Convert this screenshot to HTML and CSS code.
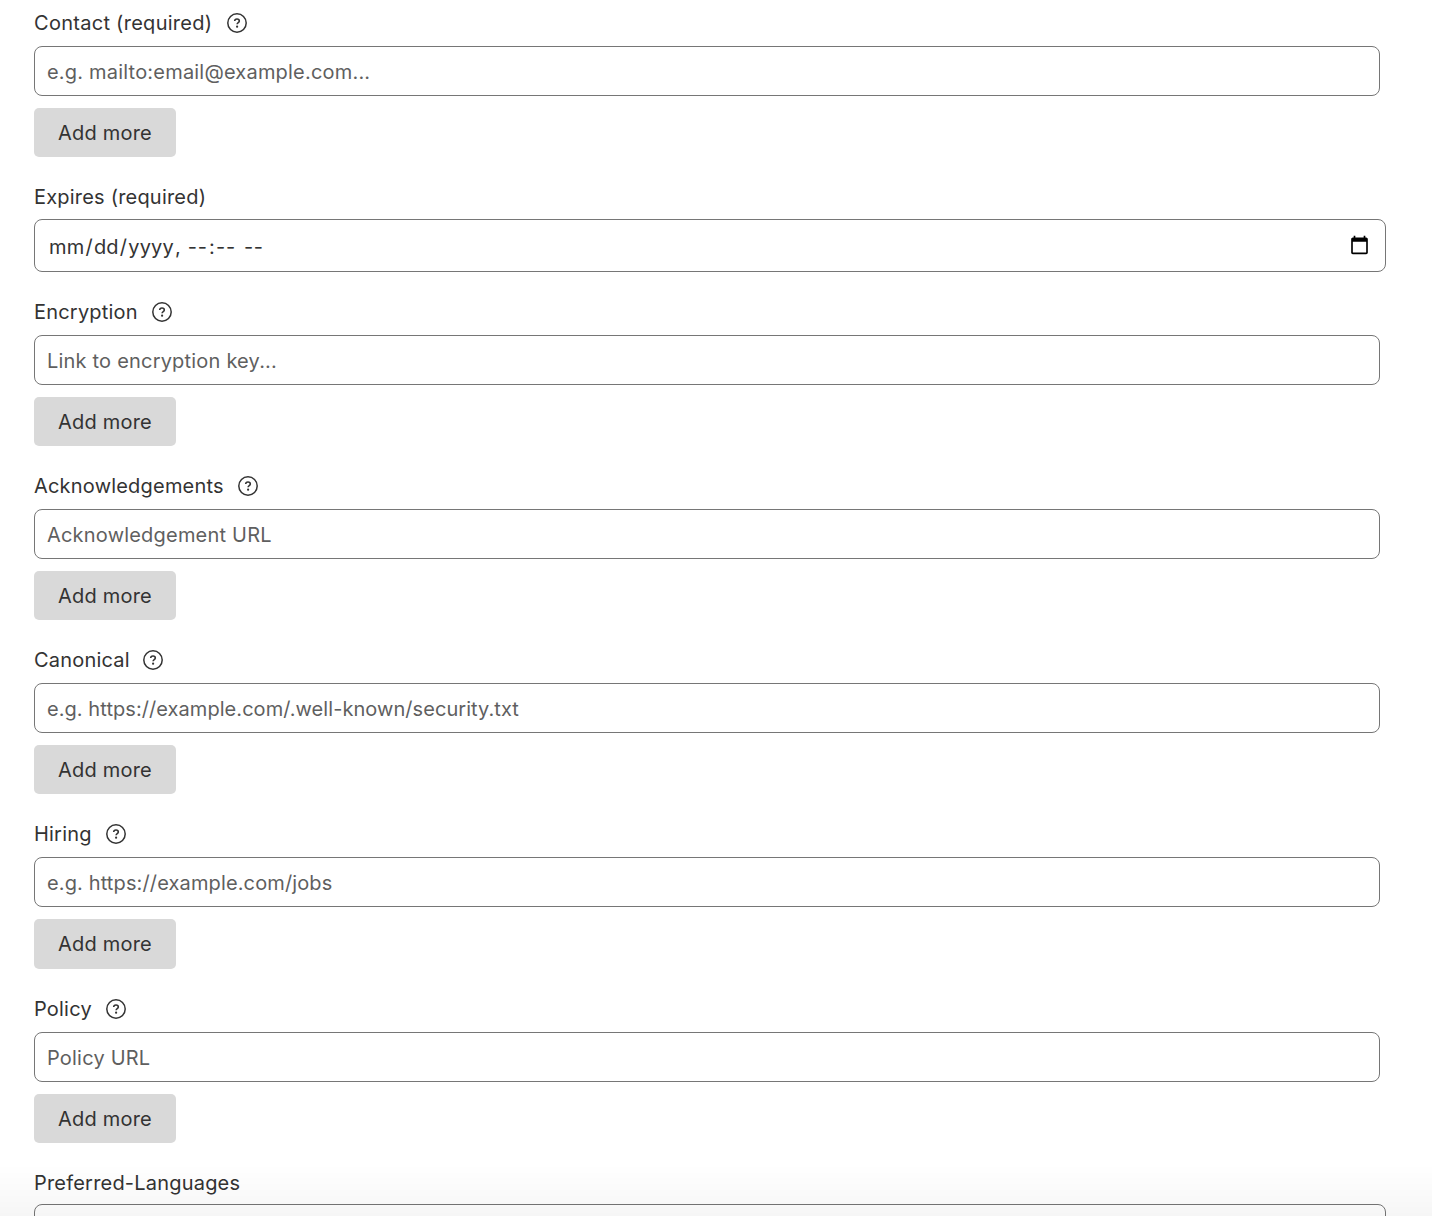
FILE: index.html
```html
<!DOCTYPE html>
<html lang="en">
<head>
    <meta charset="UTF-8">
    <meta name="viewport" content="width=device-width, initial-scale=1.0">
    <title>security.txt</title>
    <link rel="stylesheet" href="styles.css">
</head>
<body>

    <!-- Shared help icon -->
    <svg class="sprite" aria-hidden="true">
        <symbol id="help" viewBox="0 0 20 20">
            <circle cx="10" cy="10" r="9.2" fill="none" stroke="currentColor" stroke-width="1.5"/>
            <path d="M7.7 8.1c0-1.3 1-2.1 2.3-2.1s2.3.8 2.3 2c0 1.6-2.2 1.6-2.2 3.3" fill="none" stroke="currentColor" stroke-width="1.6"/>
            <circle cx="10.1" cy="13.7" r="1.1" fill="currentColor"/>
        </symbol>
    </svg>

    <form class="form">
        <div class="field">
            <div class="label-row label-contact">
                <label for="contact">Contact (required)</label>
                <svg class="help"><use href="#help"/></svg>
            </div>
            <input class="text-input" type="text" id="contact" placeholder="e.g. mailto:email@example.com...">
            <button class="add" type="button">Add more</button>
        </div>

        <div class="field">
            <div class="label-row label-plain">
                <label for="expires">Expires (required)</label>
            </div>
            <input class="text-input date-input" type="datetime-local" id="expires">
        </div>

        <div class="field">
            <div class="label-row">
                <label for="encryption">Encryption</label>
                <svg class="help"><use href="#help"/></svg>
            </div>
            <input class="text-input" type="text" id="encryption" placeholder="Link to encryption key...">
            <button class="add" type="button">Add more</button>
        </div>

        <div class="field">
            <div class="label-row">
                <label for="acknowledgements">Acknowledgements</label>
                <svg class="help"><use href="#help"/></svg>
            </div>
            <input class="text-input" type="text" id="acknowledgements" placeholder="Acknowledgement URL">
            <button class="add" type="button">Add more</button>
        </div>

        <div class="field">
            <div class="label-row label-canonical">
                <label for="canonical">Canonical</label>
                <svg class="help"><use href="#help"/></svg>
            </div>
            <input class="text-input canonical-input" type="text" id="canonical" placeholder="e.g. https://example.com/.well-known/security.txt">
            <button class="add" type="button">Add more</button>
        </div>

        <div class="field">
            <div class="label-row">
                <label for="hiring">Hiring</label>
                <svg class="help"><use href="#help"/></svg>
            </div>
            <input class="text-input hiring-input" type="text" id="hiring" placeholder="e.g. https://example.com/jobs">
            <button class="add" type="button">Add more</button>
        </div>

        <div class="field">
            <div class="label-row">
                <label for="policy">Policy</label>
                <svg class="help"><use href="#help"/></svg>
            </div>
            <input class="text-input" type="text" id="policy" placeholder="Policy URL">
            <button class="add" type="button">Add more</button>
        </div>

        <div class="field">
            <div class="label-row label-last">
                <label for="languages">Preferred-Languages</label>
            </div>
            <input class="text-input wide-input" type="text" id="languages">
        </div>
    </form>

    <div class="fade"></div>

</body>
</html>
```

FILE: styles.css
```css
body { margin: 0; height: 1216px; overflow: hidden; background: #fff; color: #333; font-family: Inter, "Liberation Sans", sans-serif; font-size: 20px; letter-spacing: 0.2px; }
.sprite { display: none; }
.form { padding: 0 46px 0 34px; }
.field { display: flex; flex-direction: column; align-items: flex-start; margin-bottom: 17px; }
.label-row { display: flex; align-items: center; gap: 14px; height: 46px; line-height: 46px; }
.label-contact { gap: 15px; letter-spacing: 0.28px; }
.label-canonical { gap: 13px; }
.label-plain { height: 45px; }
.label-last { box-sizing: border-box; height: 44px; padding-top: 3px; }
.help { width: 20px; height: 20px; }
.text-input { box-sizing: border-box; width: 1346px; height: 50px; padding: 2px 12px 0; border: 1px solid #767676; border-radius: 8px; background: #fff; color: #333; font: inherit; letter-spacing: inherit; }
.text-input::placeholder { color: #5f5f5f; opacity: 1; }
.canonical-input { letter-spacing: 0.06px; }
.hiring-input { letter-spacing: 0.13px; }
.date-input { width: 1352px; height: 52.6px; padding: 1px 13px 0; }
.date-input::-webkit-datetime-edit { padding-top: 2px; }
.date-input::-webkit-datetime-edit-hour-field,
.date-input::-webkit-datetime-edit-minute-field { letter-spacing: 0.9px; }
.date-input::-webkit-datetime-edit-ampm-field { margin-left: 2px; letter-spacing: 0.6px; }
.date-input::-webkit-calendar-picker-indicator { width: 21px; height: 21px; }
.wide-input { width: 1352px; }
.add { width: 142px; height: 49.2px; margin-top: 12px; padding: 0.8px 0 0; border: 0; border-radius: 5px; background: #d9d9d9; color: #333; font: inherit; letter-spacing: inherit; cursor: pointer; }
/* Shade along the bottom edge */
.fade { position: fixed; left: 0; right: 0; bottom: 0; height: 52px; background: linear-gradient(rgba(0,0,0,0), rgba(0,0,0,0.035)); pointer-events: none; }
```
